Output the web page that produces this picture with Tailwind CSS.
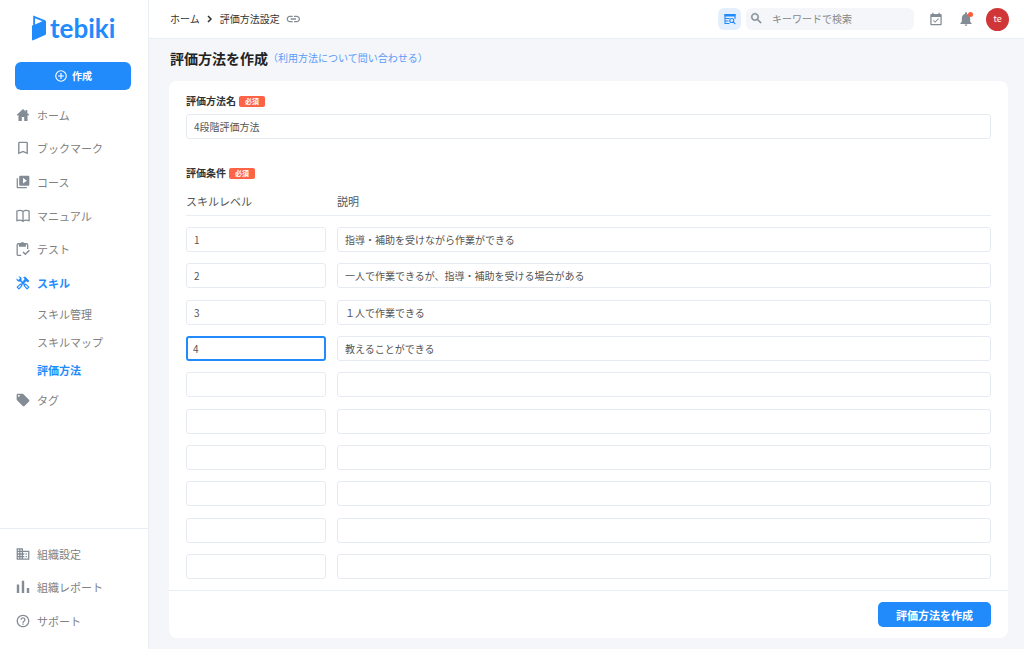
<!DOCTYPE html>
<html lang="ja">
<head>
<meta charset="utf-8">
<title>評価方法を作成 | tebiki</title>
<script src="https://cdn.jsdelivr.net/npm/@tailwindcss/browser@4"></script>
</head>
<body class="flex min-h-screen bg-[#f4f6fa] font-['Noto_Sans_CJK_JP',sans-serif] text-[10px] leading-4 text-[#333]">

<aside class="flex w-[149px] shrink-0 flex-col border-r border-[#e9edf4] bg-white text-[11px] text-[#808080]">
  <a href="#" class="ml-8 mt-3 flex h-8 items-center gap-1 text-[#218bfc]" aria-label="tebiki">
    <svg class="h-[26px] w-[14px]" viewBox="0 0 14 26" fill="currentColor"><path fill-rule="evenodd" d="M1.2.6 13 5.2c.6.3 1 .7 1 1.3v12.3c0 .6-.3 1-.9 1.3L1.2 25.3c-.7.3-1.2 0-1.2-.8V10.700l1.200-.6ZM3 3.200V9.400L10.500 6.200Z"/></svg>
    <span class="font-['Lato'] text-[26px] font-bold leading-8">tebiki</span>
  </a>
  <button class="ml-[15px] mr-[17px] mt-[18px] flex h-7 items-center justify-center gap-1 rounded-md bg-[#218bfc] text-[10px] font-bold text-white">
    <svg class="size-[14px]" viewBox="0 0 24 24" fill="none" stroke="currentColor" stroke-width="2"><circle cx="12" cy="12" r="9"/><path d="M12 7v10M7 12h10"/></svg>
    作成
  </button>

  <nav class="mt-2 flex flex-col">
    <div class="grid h-[202px] auto-rows-fr">
      <a href="#" class="flex items-center gap-[7px] pl-4"><svg class="size-[14px] text-[#838c95]" viewBox="0 0 14 14" fill="currentColor"><path d="M7 1 .8 6.800l.9.9.8-.7V13h3.300V9h2.400v4h3.300V7l.8.700.9-.9-1.900-1.800V2H9.600v1.400z"/></svg>ホーム</a>
      <a href="#" class="flex items-center gap-[7px] pl-4"><svg class="size-[14px] text-[#838c95]" viewBox="2 2 20 20" fill="currentColor"><path d="M17 3H7c-1.100 0-2 .9-2 2v16l7-3 7 3V5c0-1.100-.9-2-2-2zm0 15-5-2.180L7 18V5h10z"/></svg>ブックマーク</a>
      <a href="#" class="flex items-center gap-[7px] pl-4"><svg class="size-[14px] text-[#838c95]" viewBox="1 1 22 22" fill="currentColor"><path d="M4 6H2v14c0 1.100.9 2 2 2h14v-2H4zm16-4H8c-1.100 0-2 .9-2 2v12c0 1.100.9 2 2 2h12c1.100 0 2-.9 2-2V4c0-1.100-.9-2-2-2zm-8 12.500v-9l6 4.500z"/></svg>コース</a>
      <a href="#" class="flex items-center gap-[7px] pl-4"><svg class="size-[14px] text-[#838c95]" viewBox="0 0 14 14" fill="none" stroke="currentColor" stroke-width="1.300"><path d="M7 2.500C5.500 1.400 2.800 1.300.9 2v9.600c2-.6 4.600-.5 6.100.6 1.500-1.100 4.100-1.200 6.100-.6V2C11.200 1.300 8.500 1.400 7 2.500zV13"/></svg>マニュアル</a>
      <a href="#" class="flex items-center gap-[7px] pl-4"><svg class="size-[14px] text-[#838c95]" viewBox="0 0 24 24" fill="none" stroke="currentColor" stroke-width="2.200"><path d="M9 23H4c-1.100 0-2-.9-2-2V5c0-1.100.9-2 2-2h14c1.100 0 2 .9 2 2v7"/><path d="m12 17 4 4 7-7" stroke-width="2.600"/><path d="M5 3h3a3 3 0 0 1 6 0h3v5H5z" fill="currentColor" stroke="none"/></svg>テスト</a>
      <a href="#" class="flex items-center gap-[7px] pl-4 font-bold text-[#218bfc]"><svg class="size-[14px]" viewBox="0 0 24 24" fill="none" stroke="currentColor" stroke-width="2"><path d="M7 7l8 8M16 8l-7 7" stroke-width="3"/><path d="M1 4 4 7 7 4 4 1C7.500 0 10.500 2.500 9.500 6.500L7 9.500C3 10.500 0 7.500 1 4z" fill="currentColor" stroke="none"/><path d="M12 2.500 15.500 1l7.500 7.500-2.500 2.500-2.500-2-3.500 2-2.500-2.500 3-3.500z" fill="currentColor" stroke="none"/><path d="m16.500 14 5.500 5-3 3-5-5.500zM7.500 14 2 19l3 3 5-5.500z" stroke-linejoin="round"/></svg>スキル</a>
    </div>
    <div class="flex flex-col pl-[37px] leading-7">
      <a href="#">スキル管理</a>
      <a href="#">スキルマップ</a>
      <a href="#" class="font-bold text-[#218bfc]">評価方法</a>
    </div>
    <a href="#" class="flex h-8 items-center gap-[7px] pl-4"><svg class="size-[14px] text-[#838c95]" viewBox="1 1 22 22" fill="currentColor"><path d="m21.410 11.580-9-9C12.050 2.220 11.550 2 11 2H4c-1.100 0-2 .9-2 2v7c0 .55.22 1.050.59 1.420l9 9c.36.36.86.58 1.410.58s1.050-.22 1.410-.59l7-7c.37-.36.59-.86.59-1.410s-.23-1.060-.59-1.420zM5.500 7C4.670 7 4 6.330 4 5.500S4.670 4 5.500 4 7 4.670 7 5.500 6.330 7 5.500 7z"/></svg>タグ</a>
  </nav>

  <nav class="mt-auto border-t border-[#e9edf4] pb-[11px] pt-2">
    <div class="grid h-[101px] auto-rows-fr">
      <a href="#" class="flex items-center gap-[7px] pl-4"><svg class="size-[14px] text-[#838c95]" viewBox="1 1 22 22" fill="currentColor"><path d="M12 7V3H2v18h20V7zM6 19H4v-2h2zm0-4H4v-2h2zm0-4H4V9h2zm0-4H4V5h2zm4 12H8v-2h2zm0-4H8v-2h2zm0-4H8V9h2zm0-4H8V5h2zm10 12h-8v-2h2v-2h-2v-2h2v-2h-2V9h8zm-2-8h-2v2h2zm0 4h-2v2h2z"/></svg>組織設定</a>
      <a href="#" class="flex items-center gap-[7px] pl-4"><svg class="size-[14px] text-[#838c95]" viewBox="0 0 14 14" fill="currentColor"><path d="M.8 4.500h2.400V13H.8zM5.800.8h2.400V13H5.800zM10.800 8h2.400v5h-2.400z"/></svg>組織レポート</a>
      <a href="#" class="flex items-center gap-[7px] pl-4"><svg class="size-[14px] text-[#838c95]" viewBox="1 1 22 22" fill="currentColor"><path d="M11 18h2v-2h-2zm1-16C6.480 2 2 6.480 2 12s4.480 10 10 10 10-4.480 10-10S17.520 2 12 2zm0 18c-4.410 0-8-3.590-8-8s3.590-8 8-8 8 3.590 8 8-3.590 8-8 8zm0-14c-2.210 0-4 1.790-4 4h2c0-1.100.9-2 2-2s2 .9 2 2c0 2-3 1.750-3 5h2c0-2.250 3-2.500 3-5 0-2.210-1.790-4-4-4z"/></svg>サポート</a>
    </div>
  </nav>
</aside>

<div class="flex min-w-0 flex-1 flex-col">
  <header class="flex h-[39px] items-center border-b border-[#e9edf4] bg-white pl-[21px] pr-[15px]">
    <a href="#">ホーム</a>
    <svg class="mx-[6px] size-2" viewBox="0 0 8 8" fill="none" stroke="#333" stroke-width="1.500"><path d="m2 1 3 3-3 3"/></svg>
    <span>評価方法設定</span>
    <button class="ml-[6px]" aria-label="リンクをコピー"><svg class="size-4" viewBox="1 0 24 24" fill="#838c95"><path d="M3.900 12c0-1.710 1.390-3.100 3.100-3.100h4V7H7c-2.760 0-5 2.240-5 5s2.240 5 5 5h4v-1.900H7c-1.710 0-3.100-1.390-3.100-3.100zM8 13h8v-2H8zm9-6h-4v1.900h4c1.710 0 3.100 1.390 3.100 3.100s-1.390 3.100-3.100 3.100h-4V17h4c2.760 0 5-2.240 5-5s-2.240-5-5-5z"/></svg></button>
    <button class="ml-auto flex h-[22px] w-[23px] items-center justify-center rounded-md bg-[#e4effe]" aria-label="詳細検索"><svg class="size-3" viewBox="0 0 24 24" fill="none" stroke="#218bfc" stroke-width="2.200"><path d="M22 12V3H2v18h9M2 11h9M2 16h7"/><path d="M1 2h22v5H1z" fill="#218bfc" stroke="none"/><circle cx="15.500" cy="15" r="4"/><path d="m18.500 18 4 4"/></svg></button>
    <label class="ml-[5px] flex h-[22px] w-[168px] items-center gap-2 rounded-md bg-[#f4f6fa] pl-1">
      <svg class="size-[14px] shrink-0" viewBox="1 1 24 24" fill="#838c95"><path d="M15.500 14h-.79l-.28-.27C15.410 12.590 16 11.110 16 9.500 16 5.910 13.090 3 9.500 3S3 5.910 3 9.500 5.910 16 9.500 16c1.610 0 3.090-.59 4.230-1.570l.27.28v.79l5 4.990L20.490 19zm-6 0C7.010 14 5 11.990 5 9.500S7.010 5 9.500 5 14 7.010 14 9.500 11.990 14 9.500 14z" stroke="#838c95" stroke-width=".7"/></svg>
      <input type="search" aria-label="検索" placeholder="キーワードで検索" class="min-w-0 flex-1 bg-transparent outline-none placeholder:text-[#868686]">
    </label>
    <button class="ml-[15px]" aria-label="予定"><svg class="size-[14px]" viewBox="1 0 22 22" fill="#838c95"><path d="M16.530 11.060 15.470 10l-4.880 4.880-2.120-2.120-1.060 1.060L10.590 17zM19 3h-1V1h-2v2H8V1H6v2H5c-1.110 0-1.990.9-1.990 2L3 19c0 1.100.89 2 2 2h14c1.100 0 2-.9 2-2V5c0-1.100-.9-2-2-2zm0 16H5V8h14z"/></svg></button>
    <button class="relative ml-4" aria-label="お知らせ"><svg class="size-[14px]" viewBox="2 2 20 20" fill="#838c95"><path d="M12 22c1.100 0 2-.9 2-2h-4c0 1.100.89 2 2 2zm6-6v-5c0-3.070-1.640-5.640-4.500-6.320V4c0-.83-.67-1.500-1.500-1.500s-1.500.67-1.500 1.500v.68C7.630 5.360 6 7.920 6 11v5l-2 2v1h16v-1z"/></svg><span class="absolute right-0 top-0 size-[5px] rounded-full bg-[#ff5a3c]"></span></button>
    <button class="ml-[13px] size-[23px] rounded-full bg-[#d03538] text-[9px] text-white">te</button>
  </header>

  <main class="flex flex-1 flex-col pb-[11px] pl-5 pr-4 pt-[7px]">
    <div class="flex h-6 items-center pl-px">
      <h1 class="text-sm font-bold leading-5 text-[#222]">評価方法を作成</h1>
      <a href="#" class="text-[#5b9bf8]">（利用方法について問い合わせる）</a>
    </div>

    <form class="mt-[11px] flex flex-1 flex-col rounded-lg bg-white">
      <div class="flex flex-col px-[17px] pt-3">
        <div class="flex items-center gap-[3px]">
          <label for="name" class="font-bold">評価方法名</label>
          <span class="rounded-xs bg-[#ff6347] px-[6px] text-[7px] font-bold leading-[11px] text-white">必須</span>
        </div>
        <input id="name" value="4段階評価方法" class="mt-[5px] h-[25px] rounded-[3px] border border-[#e6ebf3] px-[7px] text-[#555] outline-none">

        <div class="mt-[26px] flex items-center gap-[3px]">
          <h2 class="font-bold">評価条件</h2>
          <span class="rounded-xs bg-[#ff6347] px-[6px] text-[7px] font-bold leading-[11px] text-white">必須</span>
        </div>
        <table class="mt-[6px] h-[392px] w-full border-collapse text-[#555]">
          <thead>
            <tr class="h-7 border-b border-[#e9edf4] text-left text-[11px]">
              <th id="level" class="w-[151px] p-0 font-normal">スキルレベル</th>
              <th id="desc" class="p-0 font-normal">説明</th>
            </tr>
          </thead>
          <tbody id="rows"></tbody>
        </table>
      </div>
      <div class="mt-[11px] flex justify-end border-t border-[#e9edf4] px-[17px] py-[11px]">
        <button type="button" class="h-[25px] rounded-[5px] bg-[#218bfc] px-[18px] text-[11px] font-bold text-white">評価方法を作成</button>
      </div>
    </form>
  </main>
</div>

<template id="row">
  <tr>
    <td class="p-0 pr-[11px] align-bottom"><input aria-labelledby="level" class="block h-[25px] w-full rounded-[3px] border border-[#e6ebf3] px-[7px] outline-none focus:border-2 focus:border-[#218bfc] focus:px-[5px]"></td>
    <td class="p-0 align-bottom"><input aria-labelledby="desc" class="block h-[25px] w-full rounded-[3px] border border-[#e6ebf3] px-[7px] outline-none"></td>
  </tr>
</template>
<script>
  const levels = [
    ['1', '指導・補助を受けながら作業ができる'],
    ['2', '一人で作業できるが、指導・補助を受ける場合がある'],
    ['3', '１人で作業できる'],
    ['4', '教えることができる'],
    ['', ''], ['', ''], ['', ''], ['', ''], ['', ''], ['', '']
  ];
  const body = document.getElementById('rows');
  for (const values of levels) {
    const row = document.getElementById('row').content.cloneNode(true);
    row.querySelectorAll('input').forEach((input, i) => { input.value = values[i]; });
    body.append(row);
  }
  // The last filled-in level is the one being edited.
  const current = body.rows[3].querySelector('input');
  current.style.caretColor = 'transparent';
  current.focus({ preventScroll: true });
</script>
</body>
</html>
